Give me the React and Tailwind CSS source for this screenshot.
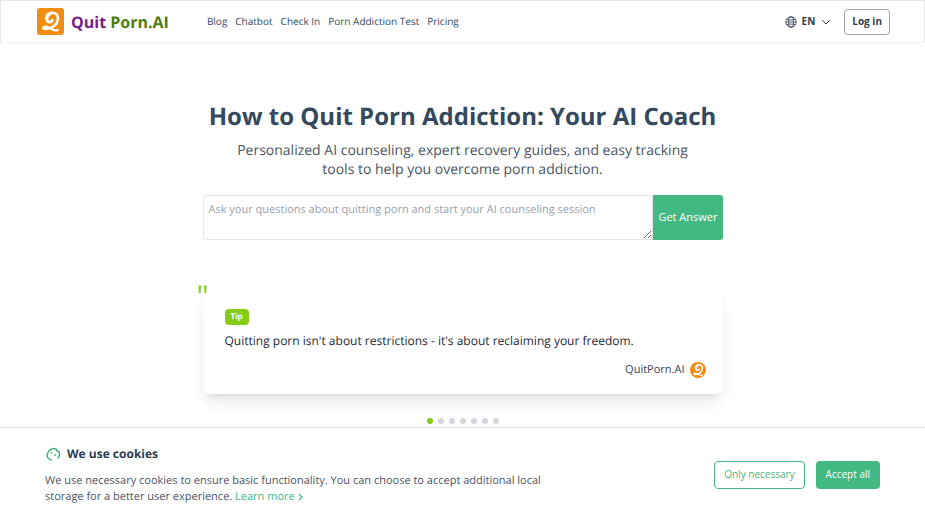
import React, { useState } from 'react';

const navLinks = ['Blog', 'Chatbot', 'Check In', 'Porn Addiction Test', 'Pricing'];

const tips = [
    "Quitting porn isn't about restrictions - it's about reclaiming your freedom.",
    'Small daily steps add up to lasting change.',
    'Notice your triggers before they notice you.',
    'Reach out to someone you trust today.',
    'A slip is a lesson, not the end of the road.',
    'Replace the habit with something you enjoy.',
    'Every day is a chance to start again.',
];

const QMark = ({ className }) => (
    <svg className={className} viewBox="0 0 28 28" fill="none" stroke="#fff" strokeLinecap="round" strokeLinejoin="round" aria-hidden="true">
        <path strokeWidth="2.6" d="M9.5 10.5C9.5 6.500 12.500 4.800 16 4.800C20.500 4.800 22.300 8 21.500 12.500C20.500 17 17 20 13 20.800" />
        <path strokeWidth="3" d="M14.500 5.500C11.500 7 10 9.500 10.500 12.500C11.200 15.200 14.500 15.300 15.800 12.800" />
        <path strokeWidth="2.2" d="M13 20.800C10 22.300 6.500 22.300 6.500 20.600C6.500 18.800 10 19 12.500 20.500C15.500 22.300 18.500 24.500 21.500 22.800" />
    </svg>
);

const CookieIcon = () => (
    <svg className="h-4 w-4" viewBox="0 0 16 16" fill="none" stroke="#42b883" strokeWidth="1.5" strokeLinecap="round" aria-hidden="true">
        <path d="M6 14C2.500 13 1 9.500 3 6.500" />
        <path d="M3.500 5.500C5 3 8.500 2 11 3L12 5L14 5.500L14.500 8C14.500 10 14 11 13 12" />
        <path d="M6.500 6.500V7M9.500 9H10.500" />
    </svg>
);

const Header = () => (
    <header className="flex h-[43px] items-center border border-gray-200 border-b-gray-100 pr-[34px] pl-9">
        <a href="#" className="flex items-center gap-[7px] text-base font-bold">
            <span className="flex h-[27px] w-[27px] items-center justify-center rounded-[3px] bg-[#f28c13]">
                <QMark className="h-[27px] w-[27px]" />
            </span>
            <span>
                <span className="text-[#7b1d89]">Quit</span> <span className="text-[#4d7c0f]">Porn.AI</span>
            </span>
        </a>
        <nav className="ml-[38px] flex gap-2 text-[10px] text-[#34495e]">
            {navLinks.map((link) => (
                <a key={link} href="#">{link}</a>
            ))}
        </nav>
        <div className="ml-auto flex items-center gap-3 text-[10px] font-bold text-[#2c3e50]">
            <button className="flex items-center gap-[5px]">
                <svg className="h-3 w-3" viewBox="0 0 24 24" fill="none" stroke="currentColor" strokeWidth="1.6" aria-hidden="true">
                    <circle cx="12" cy="12" r="10.500" />
                    <ellipse cx="12" cy="12" rx="5" ry="10.500" />
                    <path d="M1.500 12h21M3.500 6.500c5 2 12 2 17 0M3.500 17.500c5-2 12-2 17 0" />
                </svg>
                <span>EN</span>
                <svg className="h-3 w-3" viewBox="0 0 12 12" fill="none" stroke="currentColor" strokeLinecap="round" strokeLinejoin="round" aria-hidden="true">
                    <path d="M2.500 4.500l3.500 3.500 3.500-3.500" />
                </svg>
            </button>
            <button className="h-[26px] rounded border border-gray-400 px-[7px]">Log in</button>
        </div>
    </header>
);

const TipCard = ({ text }) => (
    <section className="relative mt-12 rounded-md bg-white px-[22px] pt-[21px] pb-4 shadow-lg">
        <span className="absolute -top-2 -left-[6px] text-3xl leading-8 text-[#84cc16]">"</span>
        <span className="block w-fit rounded bg-[#84cc16] px-[6px] text-[8px] leading-4 font-bold text-white">Tip</span>
        <p className="mt-[6px] text-[12px] leading-5 text-gray-800">{text}</p>
        <div className="-mr-[5px] mt-[11px] flex items-center justify-end gap-[5px] text-[11px] leading-4 text-gray-700">
            <span>QuitPorn.AI</span>
            <span className="flex h-4 w-4 items-center justify-center rounded-full bg-[#f28c13]">
                <QMark className="h-4 w-4" />
            </span>
        </div>
    </section>
);

const CookieBanner = ({ onClose }) => (
    <section className="fixed inset-x-0 bottom-0 flex items-center justify-between border-t border-gray-200 bg-white px-[45px] pt-4 pb-[15px]">
        <div className="max-w-[500px]">
            <h2 className="flex items-center gap-[6px] text-[12px] leading-5 font-bold text-[#2c3e50]">
                <CookieIcon />
                We use cookies
            </h2>
            <p className="mt-[9px] text-[11px] leading-4 text-gray-600">
                We use necessary cookies to ensure basic functionality. You can choose to accept additional local storage for a better user experience.{' '}
                <a href="#" className="inline-flex items-center gap-[3px] text-[#42b883]">
                    Learn more
                    <svg className="h-2 w-[5px]" viewBox="0 0 5 8" fill="none" stroke="currentColor" strokeWidth="1.2" aria-hidden="true">
                        <path d="M1 1l3 3-3 3" />
                    </svg>
                </a>
            </p>
        </div>
        <div className="flex gap-[11px] text-[10px]">
            <button onClick={onClose} className="h-7 rounded border border-[#42b883] px-[9px] text-[#42b883]">Only necessary</button>
            <button onClick={onClose} className="h-7 rounded bg-[#42b883] px-[10px] text-white">Accept all</button>
        </div>
    </section>
);

export default function App() {
    const [active, setActive] = useState(0);
    const [showCookies, setShowCookies] = useState(true);

    return (
        <div className="min-h-screen bg-white font-[family-name:Open_Sans,sans-serif] [text-rendering:geometricPrecision]">
            <Header />
            <main className="mx-auto max-w-[520px] pt-14 pb-24">
                <h1 className="text-center text-2xl leading-9 font-bold text-[#34495e]">
                    How to Quit Porn Addiction: Your AI Coach
                </h1>
                <p className="mx-auto mt-[6px] max-w-[460px] text-center text-sm leading-[19px] text-gray-600">
                    Personalized AI counseling, expert recovery guides, and easy tracking tools to help you overcome porn addiction.
                </p>
                <form className="mt-4 flex" onSubmit={(e) => e.preventDefault()}>
                    <textarea
                        aria-label="Your question"
                        placeholder="Ask your questions about quitting porn and start your AI counseling session"
                        className="h-[45px] min-w-0 grow rounded-l-[3px] border border-gray-200 px-[5px] py-[6px] text-[11px] leading-4 [text-rendering:geometricPrecision] placeholder:text-gray-400"
                    />
                    <button className="rounded-r-[3px] bg-[#42b883] px-[5px] text-[11px] text-white">Get Answer</button>
                </form>
                <TipCard text={tips[active]} />
                <div className="mt-6 flex justify-center gap-[5px]">
                    {tips.map((tip, index) => (
                        <button
                            key={tip}
                            aria-label={`Tip ${index + 1}`}
                            onClick={() => setActive(index)}
                            className={`h-[6px] w-[6px] rounded-full ${index === active ? 'bg-[#84cc16]' : 'bg-gray-300'}`}
                        />
                    ))}
                </div>
            </main>
            {showCookies && <CookieBanner onClose={() => setShowCookies(false)} />}
        </div>
    );
}
